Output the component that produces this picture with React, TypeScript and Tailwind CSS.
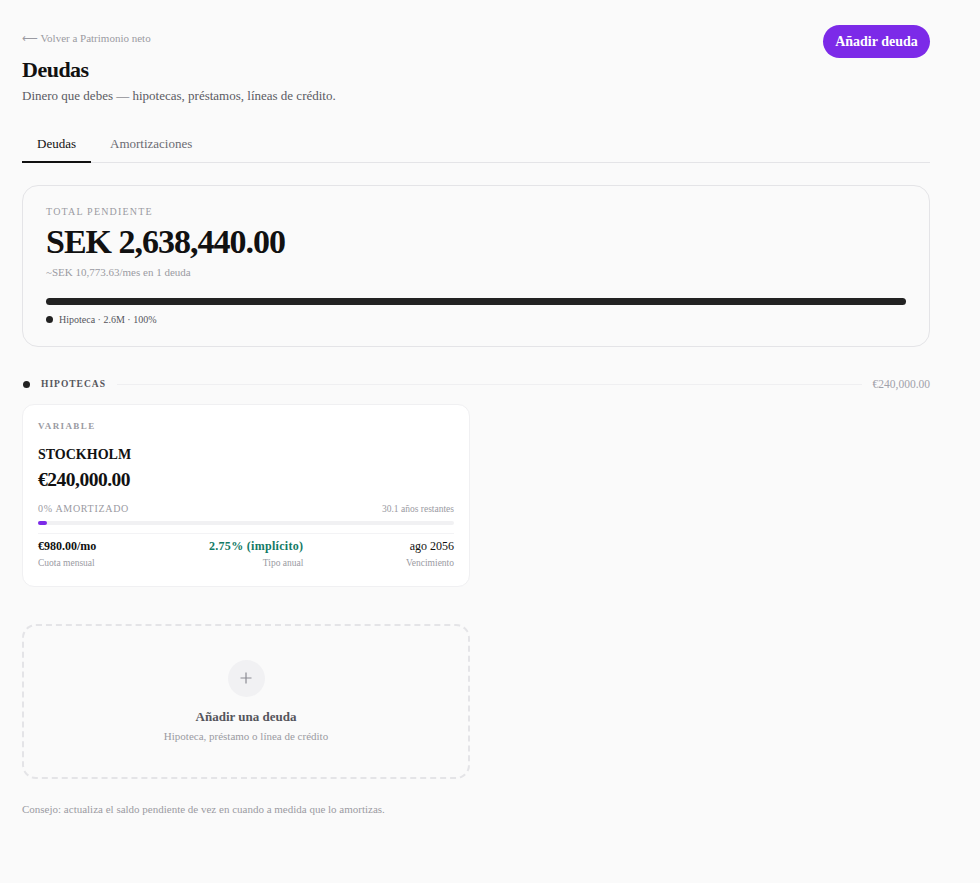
import React from "react";

export default function App() {
  return (
    <div
      className="min-h-[883px] w-full bg-[#fafafa] text-[#111]"
      style={{ fontFamily: '"Liberation Serif", "Times New Roman", serif' }}
    >
      <div className="w-[908px] ml-[22px] pt-[25px] pb-10">
        {/* Header */}
        <div className="flex items-start justify-between">
          <div>
            <div className="mt-[6px] text-[11px] leading-[14px] text-[#9a9aa2]">⟵ Volver a Patrimonio neto</div>
            <h1 className="mt-[11px] text-[22px] leading-[28px] font-bold tracking-[-0.5px] text-[#111]">Deudas</h1>
            <p className="mt-[3px] text-[13px] leading-[17px] text-[#5b5b63]">
              Dinero que debes — hipotecas, préstamos, líneas de crédito.
            </p>
          </div>
          <button className="h-[33px] w-[107px] rounded-full bg-[#7c2ae8] text-[14px] font-bold text-white">
            Añadir deuda
          </button>
        </div>

        {/* Tabs */}
        <div className="mt-[30px] flex border-b border-[#e4e4e7]">
          <div className="w-[69px] border-b-2 border-[#111] pb-[7px] text-center text-[13px] text-[#111] -mb-px">Deudas</div>
          <div className="ml-[19px] pb-[7px] text-[13px] text-[#6b6b73]">Amortizaciones</div>
        </div>

        {/* Total card */}
        <div className="mt-[22px] h-[162px] rounded-[16px] border border-[#e4e4e7] bg-[#fafafa] px-[23px] pt-[20px]">
          <div className="text-[10px] leading-[12px] tracking-[1.2px] text-[#9a9aa2]">TOTAL PENDIENTE</div>
          <div className="mt-[5px] text-[34px] leading-[38px] font-bold tracking-[-1px] text-[#111]">SEK 2,638,440.00</div>
          <div className="mt-[4px] text-[11px] leading-[14px] text-[#9a9aa2]">~SEK 10,773.63/mes en 1 deuda</div>
          <div className="mt-[19px] h-[7px] w-full rounded-full bg-[#222]" />
          <div className="mt-[9px] flex items-center gap-[6px] text-[10px] leading-[12px] text-[#55555c]">
            <span className="h-[7px] w-[7px] rounded-full bg-[#222]" />
            Hipoteca · 2.6M · 100%
          </div>
        </div>

        {/* Section header */}
        <div className="mt-[29px] flex items-center">
          <span className="ml-[1px] h-[7px] w-[7px] rounded-full bg-[#222]" />
          <span className="ml-[11px] text-[9.5px] font-bold tracking-[1px] text-[#55555c]">HIPOTECAS</span>
          <span className="mx-[11px] h-px flex-1 bg-[#efeff1]" />
          <span className="text-[11.5px] text-[#a1a1aa]">€240,000.00</span>
        </div>

        {/* Mortgage card */}
        <div className="mt-[11px] w-[448px] rounded-[12px] border border-[#f0f0f2] bg-white px-[15px] pt-[15px] pb-[17px]">
          <div className="text-[9px] leading-[12px] font-bold tracking-[1.4px] text-[#9a9aa2]">VARIABLE</div>
          <div className="mt-[14px] text-[14px] leading-[17px] font-bold text-[#111]">STOCKHOLM</div>
          <div className="mt-[5px] text-[19.5px] leading-[24px] font-bold tracking-[-0.5px] text-[#111]">€240,000.00</div>
          <div className="mt-[11px] flex items-center justify-between text-[10px] leading-[12px] text-[#9a9aa2]">
            <span className="tracking-[0.7px]">0% AMORTIZADO</span>
            <span className="text-[9.5px]">30.1 años restantes</span>
          </div>
          <div className="mt-[6px] h-[4px] w-full rounded-full bg-[#f1f1f3]">
            <div className="h-[4px] w-[9px] rounded-full bg-[#7c2ae8]" />
          </div>
          <div className="mt-[8px] border-t border-[#f3f3f5] pt-[4px] flex justify-between">
            <div>
              <div className="text-[12px] leading-[16px] font-bold text-[#111]">€980.00/mo</div>
              <div className="mt-[3px] text-[9.5px] leading-[12px] text-[#9a9aa2]">Cuota mensual</div>
            </div>
            <div className="text-right pl-[10px]">
              <div className="text-[12px] leading-[16px] font-bold tracking-[0.3px] text-[#137a66]">2.75% (implícito)</div>
              <div className="mt-[3px] text-[9.5px] leading-[12px] text-[#9a9aa2]">Tipo anual</div>
            </div>
            <div className="text-right">
              <div className="text-[12px] leading-[16px] text-[#111]">ago 2056</div>
              <div className="mt-[3px] text-[9.5px] leading-[12px] text-[#9a9aa2]">Vencimiento</div>
            </div>
          </div>
        </div>

        {/* Add card */}
        <div className="mt-[37px] flex h-[155px] w-[448px] flex-col items-center rounded-[14px] border-2 border-dashed border-[#e4e4e7] pt-[34px]">
          <div className="flex h-[37px] w-[37px] items-center justify-center rounded-full bg-[#f1f1f3]">
            <svg width="12" height="12" viewBox="0 0 12 12" fill="none" stroke="#8b8b93" strokeWidth="1.2">
              <path d="M6 0.5v11M0.5 6h11" />
            </svg>
          </div>
          <div className="mt-[12px] text-[13px] leading-[16px] font-bold text-[#55555c]">Añadir una deuda</div>
          <div className="mt-[4px] text-[11px] leading-[14px] text-[#9a9aa2]">Hipoteca, préstamo o línea de crédito</div>
        </div>

        {/* Tip */}
        <div className="mt-[23px] text-[11px] leading-[14px] text-[#9a9aa2]">
          Consejo: actualiza el saldo pendiente de vez en cuando a medida que lo amortizas.
        </div>
      </div>
    </div>
  );
}
